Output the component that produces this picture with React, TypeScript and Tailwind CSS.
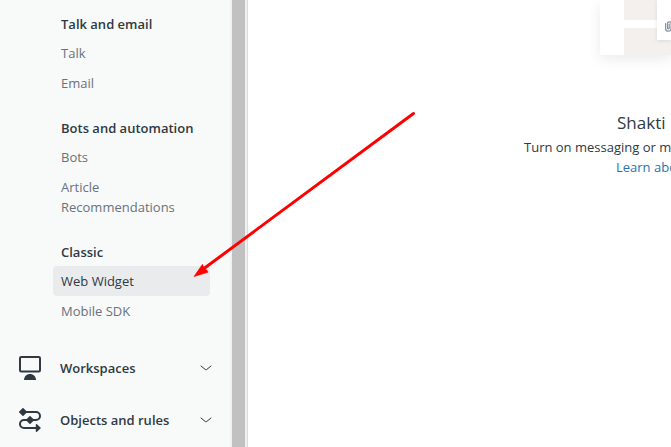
import clsx from "clsx";

const SECTIONS = [
  { title: "Talk and email", items: ["Talk", "Email"] },
  { title: "Bots and automation", items: ["Bots", "Article Recommendations"] },
  { title: "Classic", items: ["Web Widget", "Mobile SDK"] },
];

const ACTIVE_ITEM = "Web Widget";

const GROUPS = [
  { label: "Workspaces", Icon: MonitorIcon },
  { label: "Objects and rules", Icon: FlowIcon },
];

export default function App() {
  return (
    <div className="relative flex h-screen overflow-hidden bg-white font-['Open_Sans','Noto_Sans',sans-serif] text-[13px] leading-5 text-[#2f3941]">
      <Sidebar />
      <Main />
      <PointerArrow />
    </div>
  );
}

function Sidebar() {
  return (
    <aside className="flex w-62 shrink-0 border-r border-[#d8dcde] bg-[#f8f9f9]">
      <nav className="min-w-0 flex-1 pt-3.5">
        <div className="flex flex-col gap-5 pr-5 pl-[53px]">
          {SECTIONS.map((s) => (
            <section key={s.title}>
              <h2 className="mb-1 pl-2 font-semibold whitespace-nowrap">{s.title}</h2>
              <ul>
                {s.items.map((item) => (
                  <li key={item}>
                    <a
                      href="#"
                      className={clsx(
                        "block rounded px-2 py-[5px]",
                        item === ACTIVE_ITEM ? "bg-[#e9ebed]" : "text-[#68737d]",
                      )}
                    >
                      {item}
                    </a>
                  </li>
                ))}
              </ul>
            </section>
          ))}
        </div>

        <div className="mt-4">
          {GROUPS.map(({ label, Icon }) => (
            <button key={label} type="button" className="flex h-13 w-full items-center pr-4 pl-[18px]">
              <Icon />
              <span className="ml-[18px] flex-1 text-left font-semibold whitespace-nowrap">{label}</span>
              <ChevronIcon />
            </button>
          ))}
        </div>
      </nav>

      {/* Scrollbar */}
      <div className="w-[17px] shrink-0 bg-[#f1f1f1] px-0.5">
        <div className="h-full bg-[#c1c1c1]" />
      </div>
    </aside>
  );
}

function Main() {
  return (
    <main className="flex min-w-0 flex-1 flex-col overflow-hidden whitespace-nowrap">
      <WidgetPreview />
      <h1 className="mt-[54px] pl-[369px] text-[17px] leading-7">Shakti</h1>
      <p className="pl-[276px]">Turn on messaging or m</p>
      <a href="#" className="pl-[368px] text-[#1f73b7]">Learn abo</a>
    </main>
  );
}

function WidgetPreview() {
  return (
    <div className="relative ml-[352px] flex h-[55px] bg-white pl-6 shadow-[0_4px_12px_rgba(47,57,65,0.10)]">
      <div className="flex flex-1 flex-col gap-2">
        <div className="h-5 bg-[#f3f0ee]" />
        <div className="flex-1 bg-[#f3f0ee]" />
      </div>
      <div className="absolute top-0 right-0 flex h-10 w-3.5 items-end bg-white pb-2 pl-2 shadow-[0_1px_4px_rgba(47,57,65,0.12)]">
        <svg className="h-3 w-2 shrink-0" viewBox="0 0 8 12" fill="none" stroke="#87929d" strokeWidth="1.2" strokeLinecap="round">
          <path d="M.6 3.500v5a2.750 2.750 0 0 0 5.500 0V3a2 2 0 0 0-3.600 0v5.200a.9.9 0 0 0 1.700 0V4" />
        </svg>
      </div>
    </div>
  );
}

function MonitorIcon() {
  return (
    <svg className="h-6 w-6 shrink-0" viewBox="0 0 24 24" fill="none">
      <rect x="2" y="1" width="20" height="14.500" rx="1.2" stroke="#2f3941" strokeWidth="2" />
      <path d="M6 24c0-3.400 2.700-6 6-6s6 2.600 6 6z" fill="#2f3941" />
    </svg>
  );
}

function FlowIcon() {
  return (
    <svg className="h-6 w-6 shrink-0" viewBox="0 0 24 24" fill="none">
      <path
        d="M5 4h13a4 4 0 0 1 0 8H6a4 4 0 0 0 0 8h13"
        stroke="#2f3941"
        strokeWidth="2"
      />
      <path
        d="M5 .7l3.300 3.300L5 7.300 1.700 4zM12 8.700l3.300 3.300-3.300 3.300L8.700 12zM18.500 16.700l3.500 3.300-3.500 3.300z"
        fill="#2f3941"
        stroke="#2f3941"
        strokeWidth="1.4"
        strokeLinejoin="round"
      />
    </svg>
  );
}

function ChevronIcon() {
  return (
    <svg className="h-4 w-4 shrink-0" viewBox="0 0 16 16" fill="none" stroke="#2f3941" strokeLinecap="round">
      <path d="M3 6l4.300 3.500c.4.3 1 .3 1.400 0L13 6" />
    </svg>
  );
}

function PointerArrow() {
  return (
    <svg
      className="pointer-events-none absolute top-[110px] left-[190px] h-[170px] w-[230px]"
      viewBox="0 0 230 170"
      aria-hidden="true"
    >
      <path d="M223.500 3.500L14 158.500" stroke="#ff0000" strokeWidth="3" strokeLinecap="round" />
      <path d="M4 166.500L12.500 154.300l1 2.700 4 4 .5 1.300z" fill="#ff0000" stroke="#ff0000" strokeWidth=".6" />
    </svg>
  );
}
